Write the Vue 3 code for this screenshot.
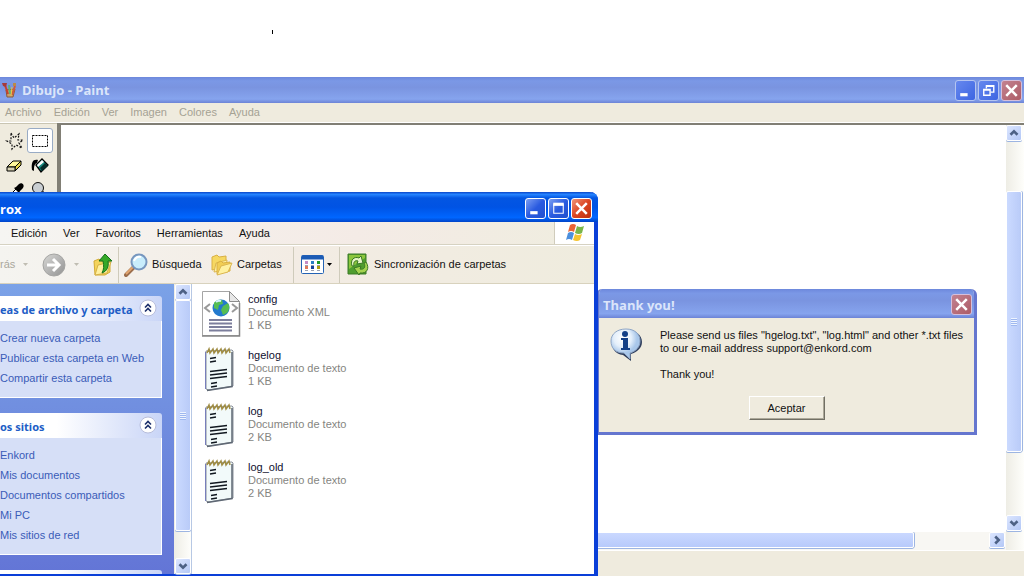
<script setup>
const paintMenu = ['Archivo', 'Edición', 'Ver', 'Imagen', 'Colores', 'Ayuda']
const explorerMenu = ['Edición', 'Ver', 'Favoritos', 'Herramientas', 'Ayuda']
const panels = [
  { title: 'eas de archivo y carpeta', links: ['Crear nueva carpeta', 'Publicar esta carpeta en Web', 'Compartir esta carpeta'] },
  { title: 'os sitios', links: ['Enkord', 'Mis documentos', 'Documentos compartidos', 'Mi PC', 'Mis sitios de red'] },
]
const files = [
  { name: 'config', type: 'Documento XML', size: '1 KB', xml: true },
  { name: 'hgelog', type: 'Documento de texto', size: '1 KB' },
  { name: 'log', type: 'Documento de texto', size: '2 KB' },
  { name: 'log_old', type: 'Documento de texto', size: '2 KB' },
]
const dots = ['#c58bc4', '#2b7fc4', '#1f9a2c', '#e07a5a', '#17409b', '#b49a10']
</script>

<template>
  <main class="desktop">
    <i class="speck"></i>

    <section class="window paint">
      <header class="titlebar inactive">
        <svg class="app-icon" width="16" height="16" viewBox="0 0 16 16">
          <path d="M4 8l1 7h6l2-8z" fill="#c9a06a" stroke="#8a5a3a" />
          <path d="M6 12L3 3" stroke="#c9402c" stroke-width="2" />
          <path d="M8 12L7 3" stroke="#5fae7a" stroke-width="2" />
          <path d="M10 13l3-9" stroke="#d05a3a" stroke-width="2" />
          <path d="M9 14l1-9" stroke="#e8c84a" stroke-width="1" />
          <path d="M0 1l5 0-1 4-3-1z" fill="#a63a3a" /><path d="M11 1h3v3h-3z" fill="#b98a4a" />
        </svg>
        <h1>Dibujo - Paint</h1>
        <div class="controls">
          <button class="ctl" aria-label="Minimizar"><svg viewBox="0 0 18 18"><path d="M4 13h7" stroke="#fff" stroke-width="3" /></svg></button>
          <button class="ctl" aria-label="Restaurar"><svg viewBox="0 0 18 18" fill="none" stroke="#fff"><path d="M7 7V4.500h7v6h-3M7 5h7" stroke-width="1.300" /><path d="M4.500 8h6v5.500h-6zM4 8.500h7" stroke-width="1.300" /></svg></button>
          <button class="ctl close" aria-label="Cerrar"><svg viewBox="0 0 18 18"><path d="M4 4l10 10M14 4L4 14" stroke="#fff" stroke-width="2.400" /></svg></button>
        </div>
      </header>
      <nav class="menubar paint-menu"><button v-for="m in paintMenu" :key="m">{{ m }}</button></nav>
      <div class="workspace">
        <div class="tools">
          <button aria-label="Selección libre"><svg width="22" height="22" viewBox="0 0 22 22" fill="none" stroke="#111" stroke-width="1.200" stroke-dasharray="2 1.500"><path d="M7 3l3 5 5-4-1 6h5l-4 3 3 5-6-3-4 4v-5l-5-3h4z" /></svg></button>
          <button class="chosen" aria-label="Selección"><svg width="22" height="22" viewBox="0 0 22 22" fill="none" stroke="#000"><path d="M3.500 5.500h15v11h-15z" stroke-dasharray="2 1" /></svg></button>
          <button aria-label="Borrador"><svg width="22" height="22" viewBox="0 0 22 22" stroke="#000" stroke-linejoin="round"><path d="M3 12l6-6h8l-6 6z" fill="#fff79a" /><path d="M11 12l6-6v4l-6 6z" fill="#e6d84b" /><path d="M3 12h8v4H3z" fill="#d6d0b0" /></svg></button>
          <button aria-label="Relleno"><svg width="22" height="22" viewBox="0 0 22 22"><path d="M7 10l6-6 6 6-7 7z" fill="#178b80" stroke="#000" stroke-width="1.300" /><path d="M8 10l5-5 2 2-6 5z" fill="#fff" /><path d="M11 13l5-5 3 3-6 5z" fill="#062c2a" /><path d="M9 5c-5-1-7 2-6 10l2 1c0-4 0-7 3-8" fill="#000" /></svg></button>
          <button aria-label="Cuentagotas"><svg width="22" height="22" viewBox="0 0 22 22"><path d="M5 18l1-3 6-6 3 3-6 6z" fill="#fff" stroke="#000" /><path d="M10 8l2-1 3-3c3-2 6 1 4 4l-3 3-1 2z" fill="#000" /></svg></button>
          <button aria-label="Lupa"><svg width="22" height="22" viewBox="0 0 22 22"><circle cx="9" cy="8" r="5.500" fill="#c9ced2" stroke="#111" /><path d="M13 12l5 5" stroke="#000" stroke-width="3" /></svg></button>
        </div>
        <div class="sheet">
          <div class="canvas"></div>
          <div class="hbar">
            <i class="thumb h"></i><i class="rest-h"></i>
            <button class="arrow" aria-label="Derecha"><svg viewBox="0 0 16 16"><path d="M6 4l4 4-4 4" /></svg></button>
          </div>
        </div>
        <div class="vbar paint-scroll">
          <button class="arrow" aria-label="Arriba"><svg viewBox="0 0 16 16"><path d="M4 10l4-4 4 4" /></svg></button>
          <i class="before"></i><i class="thumb v"><b></b></i><i class="after"></i>
          <button class="arrow" aria-label="Abajo"><svg viewBox="0 0 16 16"><path d="M4 6l4 4 4-4" /></svg></button>
        </div>
      </div>
      <footer class="status"></footer>
    </section>

    <section class="window dialog" role="dialog" aria-labelledby="dialog-title">
      <header class="titlebar inactive">
        <h2 id="dialog-title">Thank you!</h2>
        <div class="controls"><button class="ctl close" aria-label="Cerrar"><svg viewBox="0 0 18 18"><path d="M4 4l10 10M14 4L4 14" stroke="#fff" stroke-width="2.400" /></svg></button></div>
      </header>
      <div class="message">
        <svg width="34" height="36" viewBox="0 0 34 36">
          <defs><radialGradient id="bubble" cx="40%" cy="30%"><stop offset="0" stop-color="#fff" /><stop offset=".6" stop-color="#e4effb" /><stop offset="1" stop-color="#a9c7ea" /></radialGradient></defs>
          <path d="M18 3c9 0 15 5 15 12 0 6-5 10-11 12v7l-8-6C6 27 3 22 3 15 3 8 9 3 18 3z" fill="#31405e" />
          <path d="M17 2c9 0 14 5 14 12 0 6-4 10-10 12v6l-6-6C6 26 2 21 2 14 2 7 8 2 17 2z" fill="url(#bubble)" stroke="#8fa6c6" />
          <circle cx="16" cy="7" r="3" fill="#123f87" /><path d="M12 11h7v10h2v2h-9v-2h2v-8h-2z" fill="#123f87" />
        </svg>
        <div class="words">
          <p>Please send us files "hgelog.txt", "log.html" and other *.txt files<br>to our e-mail address support@enkord.com</p>
          <p>Thank you!</p>
        </div>
      </div>
      <button class="accept">Aceptar</button>
    </section>

    <section class="window explorer">
      <header class="titlebar active">
        <h2>rox</h2>
        <div class="controls">
          <button class="ctl" aria-label="Minimizar"><svg viewBox="0 0 18 18"><path d="M4 13h7" stroke="#fff" stroke-width="3" /></svg></button>
          <button class="ctl" aria-label="Maximizar"><svg viewBox="0 0 18 18"><path d="M4.500 5v8.500h9V5" fill="none" stroke="#fff" /><path d="M4 5h10" stroke="#fff" stroke-width="3" /></svg></button>
          <button class="ctl close" aria-label="Cerrar"><svg viewBox="0 0 18 18"><path d="M4 4l10 10M14 4L4 14" stroke="#fff" stroke-width="2.400" /></svg></button>
        </div>
      </header>
      <nav class="menubar explorer-menu">
        <button v-for="m in explorerMenu" :key="m">{{ m }}</button>
        <span class="flag"><svg width="20" height="18" viewBox="0 0 20 18">
          <path d="M5 1q3-2 6 0L9 8q-3-2-6 0z" fill="#ea6435" /><path d="M12 2q3 2 7 0l-2 7q-3 2-7 0z" fill="#7ab648" />
          <path d="M3 9q3-2 6 0l-2 7q-3-2-6 0z" fill="#4c8fdd" /><path d="M10 10q3 2 7 0l-2 6q-3 2-7 0z" fill="#f5c431" />
        </svg></span>
      </nav>
      <div class="toolbar">
        <button class="back">rás</button>
        <svg class="caret faded first" width="5" height="3" viewBox="0 0 5 3"><path d="M0 0h5L2.500 3z" /></svg>
        <button class="forward" aria-label="Adelante"><svg width="24" height="24" viewBox="0 0 24 24">
          <defs><linearGradient id="grey" x2="1" y2="1"><stop stop-color="#d8d8d6" /><stop offset="1" stop-color="#929292" /></linearGradient></defs>
          <circle cx="12" cy="12" r="11" fill="url(#grey)" stroke="#a5a5a3" /><path d="M5 12h12M11 6l6 6-6 6" fill="none" stroke="#fff" stroke-width="3" />
        </svg></button>
        <svg class="caret faded second" width="5" height="3" viewBox="0 0 5 3"><path d="M0 0h5L2.500 3z" /></svg>
        <button class="up" aria-label="Arriba"><svg width="20" height="24" viewBox="0 0 20 24">
          <path d="M1 8l5-2 2 2 9-1v12l-5 3H2z" fill="#f4d45c" stroke="#d3ab35" /><path d="M2 22l3-10 13-3-4 11z" fill="#fff0a0" stroke="#d6b145" />
          <path d="M12 1l7 7h-4c1 6-1 10-6 12 2-4 2-7 1-12H6z" fill="#36a928" stroke="#15711b" />
        </svg></button>
        <i class="sep"></i>
        <button class="search"><svg width="24" height="24" viewBox="0 0 24 24">
          <path d="M10 14l-8 8" stroke="#9b6d4c" stroke-width="4" stroke-linecap="round" /><path d="M9 14l-7 7" stroke="#e2a570" stroke-width="2" />
          <circle cx="15" cy="9" r="7.500" fill="#c9edfc" stroke="#7897bf" stroke-width="2" /><path d="M10 8q2-5 7-4" fill="none" stroke="#fff" stroke-width="2" />
        </svg>Búsqueda</button>
        <button class="folders"><svg width="22" height="22" viewBox="0 0 22 22">
          <path d="M1 16V3l5-2 2 2 7-1v11z" fill="#f6d862" stroke="#d9b044" /><path d="M3 18l2-9 11-3-1 10z" fill="#fff1a4" stroke="#dcb650" />
          <path d="M6 20V9l4-2 2 2 7-1v9z" fill="#f2ce55" stroke="#d9b044" /><path d="M6 21l4-9 11-3-4 9z" fill="#fff1a0" stroke="#dcb650" />
        </svg>Carpetas</button>
        <i class="sep"></i>
        <button class="views" aria-label="Vistas"><svg width="24" height="20" viewBox="0 0 24 20">
          <rect x=".5" y=".5" width="22" height="18" rx="1" fill="#fff" stroke="#2463b5" /><path d="M1 2.500h21" stroke="#1c5bb5" stroke-width="4" />
          <g v-for="(c, n) in dots" :key="c"><rect :x="4 + (n % 3) * 6" :y="n > 2 ? 11 : 6" width="3" height="3" :fill="c" /><rect :x="4 + (n % 3) * 6" :y="n > 2 ? 15 : 10" width="3" height="1" fill="#9aa0b0" /></g>
        </svg></button>
        <svg class="caret third" width="5" height="3" viewBox="0 0 5 3"><path d="M0 0h5L2.500 3z" /></svg>
        <i class="sep"></i>
        <button class="sync"><svg width="23" height="23" viewBox="0 0 23 23">
          <path d="M1 1h18v20H1z" fill="#4f9d2f" stroke="#3c7a26" /><path d="M2 2h16v3L2 16z" fill="#8cc63e" />
          <path d="M5 13c-2-6 2-10 7-8l2-2 2 7-6 1 1-3c-3-1-5 1-4 5z" fill="#e6f5c8" stroke="#397724" />
          <path d="M19 9c4 6 1 12-6 11l-1 2-5-7 7-2-1 3c4 1 6-2 4-6z" fill="#a4d350" stroke="#397724" />
        </svg>Sincronización de carpetas</button>
      </div>
      <div class="body">
        <aside class="tasks">
          <section v-for="p in panels" :key="p.title" class="panel">
            <header><h3>{{ p.title }}</h3><button class="fold" aria-label="Contraer"><svg width="18" height="18" viewBox="0 0 18 18"><circle cx="9" cy="9" r="8" fill="#fff" stroke="#b7bddb" /><path d="M6 8.500l3-3 3 3M6 12.500l3-3 3 3" fill="none" stroke="#1c2f6b" stroke-width="1.600" /></svg></button></header>
            <ul><li v-for="l in p.links" :key="l"><a href="#">{{ l }}</a></li></ul>
          </section>
          <section class="panel next"><header></header></section>
        </aside>
        <div class="vbar side-scroll">
          <button class="arrow" aria-label="Arriba"><svg viewBox="0 0 16 16"><path d="M4 10l4-4 4 4" /></svg></button>
          <i class="thumb v"><b></b></i><i class="after"></i>
          <button class="arrow" aria-label="Abajo"><svg viewBox="0 0 16 16"><path d="M4 6l4 4 4-4" /></svg></button>
        </div>
        <ul class="files">
          <li v-for="f in files" :key="f.name">
            <svg v-if="f.xml" width="40" height="48" viewBox="0 0 40 48">
              <path d="M1.500 1.500h27l10 10v34h-37z" fill="#fff" stroke="#a5a5a5" /><path d="M28.500 1.500v10h10z" fill="#e8e8e8" stroke="#8d8d8d" />
              <path d="M1 46h37.500V13" fill="none" stroke="#858585" stroke-width="1.500" />
              <circle cx="20" cy="18" r="8.500" fill="#2379cd" /><path d="M13 13q3-4 8-3l1 4-4 1-1 5-4-2zM22 16l5-3q3 5-1 10l-4 2-2-5z" fill="#55bd52" /><path d="M15 12q2-2 5-1" stroke="#d6f2ff" stroke-width="2" fill="none" />
              <path d="M9 14l-5 4 5 4M31 14l5 4-5 4" fill="none" stroke="#999" stroke-width="2" />
              <path d="M8 30h23M8 33.500h23M8 37h23M8 40.500h23" stroke="#7c7e9c" stroke-width="2" />
            </svg>
            <svg v-else width="40" height="48" viewBox="0 0 40 48">
              <path d="M5 5l26-1 1 1v35L8 44l-3-1z" fill="#f2fafa" stroke="#8b919b" /><path d="M4.500 6v37" stroke="#777ebb" /><path d="M6 44.500l25-4V6" fill="none" stroke="#5f6874" stroke-width="1.500" />
              <path d="M6 7l2-4 1 4 3-4 1 4 3-4 1 4 3-4 1 4 3-4 1 4 3-4 1 4" fill="none" stroke="#a08d45" stroke-width="1.500" />
              <path d="M9 12.500l6-1M9 16l6-1M9 25.500l17-2M9 29l17-2M9 32.500l17-2M10 37.500l6-1M10 41l6-1" stroke="#111820" stroke-width="1.300" />
            </svg>
            <div><strong>{{ f.name }}</strong><span>{{ f.type }}</span><span>{{ f.size }}</span></div>
          </li>
        </ul>
      </div>
    </section>
  </main>
</template>

<style>
html, body, #app { height: 100%; }
body { margin: 0; overflow: hidden; }
</style>

<style scoped>
* { box-sizing: border-box; }
.desktop { position: relative; height: 100%; background: #fff; overflow: hidden; font: 11px/13px "Liberation Sans", sans-serif; color: #111; }
button { font: inherit; color: inherit; background: none; border: 0; padding: 0; white-space: nowrap; }
svg { display: block; flex: none; }
h1, h2, h3, p, ul { margin: 0; padding: 0; }
ul { list-style: none; }
a { text-decoration: none; color: #3a5cb8; }
.speck { position: absolute; left: 272px; top: 30px; width: 1px; height: 4px; background: #000; }
.window { position: absolute; display: flex; flex-direction: column; }
.titlebar { display: flex; align-items: center; flex: none; }
.titlebar h1, .titlebar h2 { flex: 1; font: bold 13px/16px "Open Sans", "Noto Sans", sans-serif; }
.inactive { background: linear-gradient(#6d88dc, #7b98e6 15%, #7a94e0 40%, #86a4ee 85%, #6c83d6); color: #dbe5fa; }
.active { background: linear-gradient(#0a45c8, #2584ff 8%, #0456e2 20%, #0053e4 50%, #0066ff 85%, #0144c8); color: #fff; }
.controls { display: flex; gap: 2px; }
.ctl { width: 21px; height: 21px; border: 1px solid #fff; border-radius: 3px; background: linear-gradient(135deg, #7d9ff2, #2a5be0 50%, #2050ce); }
.ctl svg { width: 19px; height: 19px; }
.ctl.close { background: linear-gradient(135deg, #f0967a, #db4522 50%, #bd3010); }
.inactive .ctl { border-color: #b5c5f1; background: linear-gradient(135deg, #6688ee, #3d65e2); }
.inactive .ctl.close { background: linear-gradient(135deg, #c28291, #ad5c66); border-color: #d5bfdb; }
.menubar { display: flex; align-items: center; flex: none; background: #efebde; }

.paint { left: 0; right: 0; top: 77px; bottom: 0; background: #efebde; }
.paint .titlebar { height: 26px; padding: 0 2px; gap: 4px; }
.paint-menu { height: 20px; padding: 0 5px; gap: 12px; color: #a5a294; border-bottom: 1px solid #fff; }
.workspace { display: flex; flex: 1; min-height: 0; }
.tools { width: 57px; padding: 4px 3px; display: grid; grid-template-columns: 24px 26px; grid-auto-rows: 25px; border-top: 1px solid #c9c5b2; align-content: start; }
.tools button { display: grid; place-items: center; }
.tools .chosen { background: #fff; border: 1px solid #98abc5; border-radius: 3px; }
.sheet { flex: 1; display: flex; flex-direction: column; border-left: 4px solid #817f75; border-top: 2px solid #817f75; }
.canvas { flex: 1; background: #fff; }
.hbar { height: 18px; display: flex; background: #f8f7f3; padding: 0 1px 2px; }
.vbar { display: flex; flex-direction: column; width: 17px; background: linear-gradient(90deg, #eeede5, #fefefb); flex: none; }
.paint-scroll { width: 18px; border-top: 2px solid #817f75; padding: 0 2px 19px 0; }
.arrow { width: 16px; height: 16px; flex: none; border: 1px solid #fff; border-radius: 2px; background: linear-gradient(135deg, #dce6ff, #b4c8f6); box-shadow: 0 1px #9db5e2; }
.arrow svg { width: 14px; height: 14px; }
.arrow path { fill: none; stroke: #4d6185; stroke-width: 3; }
.thumb { display: flex; align-items: center; justify-content: center; border: 1px solid #fff; border-radius: 2px; background: linear-gradient(90deg, #cbdaff, #b9cbf8); box-shadow: 0 1px #9db5e2, 1px 0 #9db5e2; }
.thumb.h { flex: 850; background: linear-gradient(#cad8ff, #b7cafb); }
.rest-h { flex: 75; }
.thumb b { width: 6px; height: 8px; background: repeating-linear-gradient(#eef4ff 0 1px, #9fb8ef 1px 2px); }
.paint-scroll .before { flex: 50; }
.paint-scroll .thumb { flex: 260; }
.paint-scroll .after { flex: 63; }
.status { height: 26px; border-top: 1px solid #fff; }

.dialog { left: 596px; top: 289px; width: 381px; height: 146px; background: #efebde; border: solid #6576cf; border-width: 0 3px 3px; border-radius: 6px 6px 0 0; overflow: hidden; }
.dialog .titlebar { height: 29px; padding: 2px 2px 0 4px; }
.message { display: flex; gap: 17px; padding: 9px 6px 0 10px; }
.words { display: grid; gap: 13px; padding-top: 2px; white-space: nowrap; }
.accept { align-self: center; width: 76px; height: 24px; margin-top: 15px; border: 1px solid; border-color: #fff #716f64 #716f64 #fff; box-shadow: inset -1px -1px #aca899; }

.explorer { left: 0; top: 192px; bottom: 0; width: 598px; background: #fff; border: solid #0a3fd8; border-width: 0 4px 2px 0; border-radius: 0 8px 0 0; }
.explorer .titlebar { height: 30px; margin-right: -4px; padding: 3px 6px 0 0; border-radius: 0 8px 0 0; }
.explorer-menu { height: 23px; padding-left: 11px; gap: 16px; border-bottom: 1px solid #d6d2c2; background: linear-gradient(90deg, #f6f5f2, #f4ebe6 60%, #efeddf); }
.flag { width: 40px; height: 22px; margin-left: auto; background: #fff; border-left: 1px solid #d0ccbc; display: grid; place-items: center; }
.toolbar { display: flex; align-items: center; height: 39px; flex: none; background: linear-gradient(90deg, #f5f4f0, #f3ece4 50%, #efecde); border-top: 1px solid #fff; border-bottom: 1px solid #d8d2bd; }
.toolbar button { display: flex; align-items: center; gap: 4px; flex: none; }
.back { color: #aaa79c; width: 14px; }
.caret.faded { fill: #c0bdb2; }
.first { margin: 0 14px 0 9px; }
.forward { width: 24px; }
.second { margin: 0 14px 0 8px; }
.toolbar .up { width: 25px; }
.sep { width: 1px; height: 36px; background: #cfcbbb; flex: none; }
.toolbar .search { width: 92px; padding-left: 5px; }
.toolbar .folders { width: 82px; }
.toolbar .views { width: 33px; padding-left: 7px; }
.third { margin-right: 7px; }
.toolbar .sync { padding-left: 7px; }
.body { display: flex; flex: 1; min-height: 0; }
.tasks { width: 174px; padding-top: 12px; background: linear-gradient(#7ba2e7, #6375d6); overflow: hidden; display: flex; flex-direction: column; gap: 15px; }
.panel { width: 162px; flex: none; }
.panel header { display: flex; align-items: start; justify-content: space-between; height: 25px; padding: 3px 5px 0 0; background: linear-gradient(90deg, #fff 35%, #c9d5f7); border-radius: 0 3px 0 0; }
.panel h3 { font: bold 11px/14px "Noto Sans", "DejaVu Sans", sans-serif; color: #215dc6; padding-top: 4px; white-space: nowrap; }
.panel ul { padding: 7px 0 9px; background: #d6dff7; border: solid #fff; border-width: 0 1px 1px 0; }
.panel li { height: 20px; line-height: 20px; white-space: nowrap; }
.side-scroll { padding-left: 1px; }
.side-scroll .thumb { flex: 229; }
.side-scroll .after { flex: 27; }
.files { padding: 6px 0 0 9px; display: flex; flex-direction: column; gap: 8px; flex: 1; border-left: 1px solid #b7c8e4; }
.files li { display: flex; gap: 7px; height: 48px; }
.files div { padding-top: 3px; display: flex; flex-direction: column; }
.files strong { font-weight: normal; color: #101030; }
.files span { color: #85857f; }
</style>
